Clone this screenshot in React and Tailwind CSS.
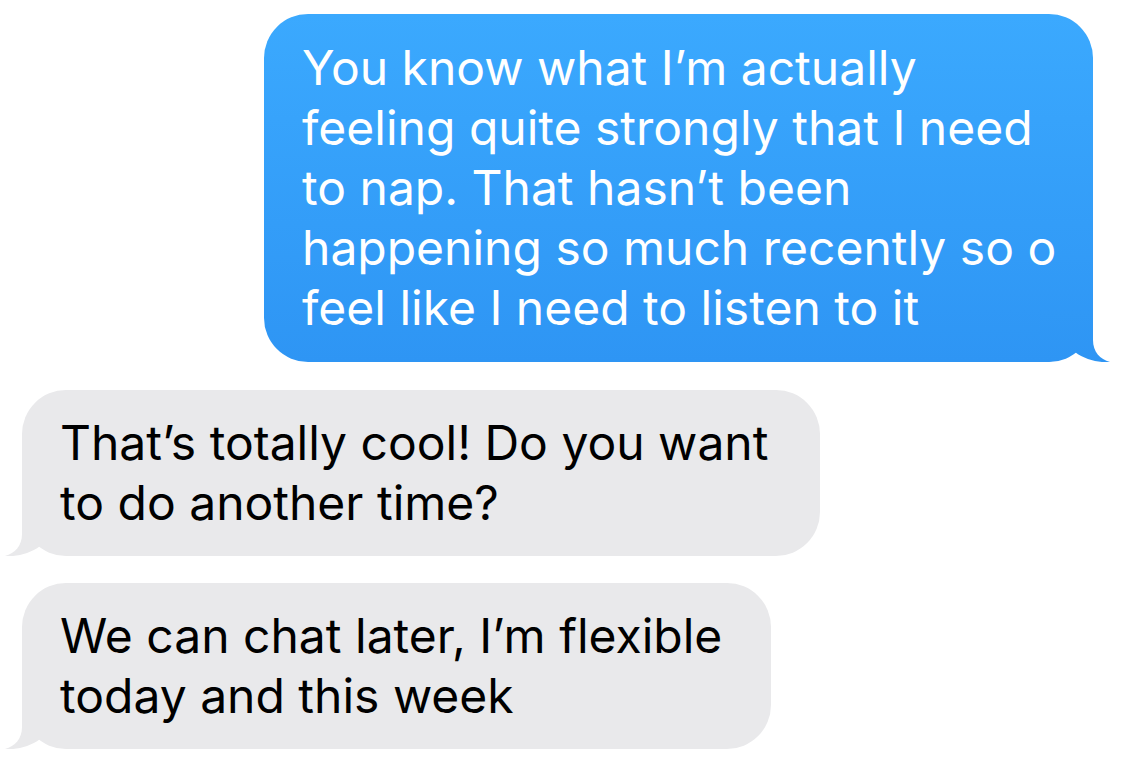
export default function App() {
    return (
        <div className="w-[1137px] h-[768px] bg-white overflow-hidden flex flex-col pt-[14px] font-['Inter','Liberation_Sans',sans-serif] text-[48px] leading-[60px]">
            {/* Sent */}
            <div className="flex justify-end pr-[44px]">
                <div className="relative w-[829px] rounded-[44px] bg-gradient-to-b from-[#3ba9fe] to-[#2e95f4] text-white px-[38px] py-[24px] whitespace-nowrap">
                    <svg className="absolute right-[-17px] bottom-0" width="70" height="50" viewBox="0 0 70 50">
                        <defs>
                            <linearGradient id="tailBlue" x1="0" y1="0" x2="0" y2="1">
                                <stop offset="0" stopColor="#3098f5" />
                                <stop offset="1" stopColor="#2e95f4" />
                            </linearGradient>
                        </defs>
                        <path d="M0 50 L0 0 L53 0 L53 28 C53 40 60 47 70 50 C60 51 45 48 35 40 C28 46 15 50 0 50 Z" fill="url(#tailBlue)" />
                    </svg>
                    <div className="relative">
                        <p>You know what I’m actually</p>
                        <p>feeling quite strongly that I need</p>
                        <p>to nap. That hasn’t been</p>
                        <p>happening so much recently so o</p>
                        <p>feel like I need to listen to it</p>
                    </div>
                </div>
            </div>

            {/* Received */}
            <div className="flex flex-col items-start pl-[22px] mt-[28px] gap-[27px] text-black">
                <div className="relative w-[798px] rounded-[44px] bg-[#e9e9eb] px-[38px] py-[23px] whitespace-nowrap">
                    <svg className="absolute left-[-17px] bottom-0" width="70" height="50" viewBox="0 0 70 50">
                        <path d="M70 50 L70 0 L17 0 L17 28 C17 40 10 47 0 50 C10 51 25 48 35 40 C42 46 55 50 70 50 Z" fill="#e9e9eb" />
                    </svg>
                    <div className="relative">
                        <p>That’s totally cool! Do you want</p>
                        <p>to do another time?</p>
                    </div>
                </div>
                <div className="relative w-[749px] rounded-[44px] bg-[#e9e9eb] px-[38px] py-[23px] whitespace-nowrap">
                    <svg className="absolute left-[-17px] bottom-0" width="70" height="50" viewBox="0 0 70 50">
                        <path d="M70 50 L70 0 L17 0 L17 28 C17 40 10 47 0 50 C10 51 25 48 35 40 C42 46 55 50 70 50 Z" fill="#e9e9eb" />
                    </svg>
                    <div className="relative">
                        <p>We can chat later, I’m flexible</p>
                        <p>today and this week</p>
                    </div>
                </div>
            </div>
        </div>
    );
}
